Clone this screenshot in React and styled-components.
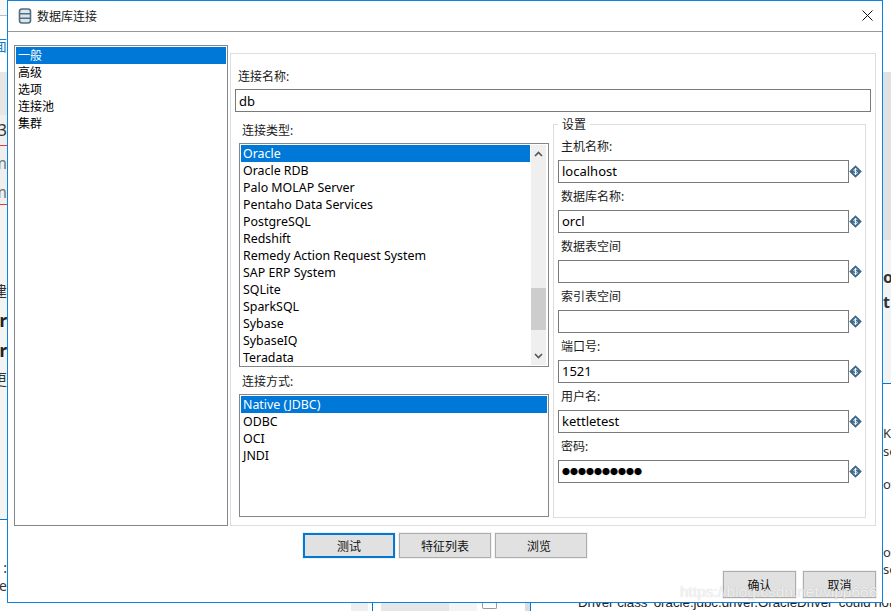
import React from "react";
import styled, { createGlobalStyle } from "styled-components";

const GlobalStyle = createGlobalStyle`
  * { box-sizing: border-box; }
  html, body { margin: 0; padding: 0; background: #fff; }
  body {
    width: 891px;
    height: 611px;
    overflow: hidden;
    font-family: "Noto Sans", "Noto Sans CJK SC", sans-serif;
    font-size: 12px;
    color: #000;
  }
`;

const Desktop = styled.div`
  position: relative;
  width: 891px;
  height: 611px;
  overflow: hidden;
  background: #fff;
`;

/* what shows of the page behind the dialog */
const LeftStrip = styled.div`
  position: absolute;
  left: 0;
  top: 0;
  width: 7px;
  height: 611px;
  display: flex;
  flex-direction: column;
`;

const RightStrip = styled.div`
  position: absolute;
  left: 883px;
  top: 0;
  width: 8px;
  height: 611px;
  display: flex;
  flex-direction: column;
`;

const BottomStrip = styled.div`
  position: absolute;
  left: 0;
  top: 603px;
  width: 891px;
  height: 8px;
  display: flex;
  overflow: hidden;
`;

const Band = styled.div`
  flex: none;
  height: ${(p) => p.$h}px;
  background: ${(p) => p.$bg || "#fff"};
  border-bottom: ${(p) => (p.$line ? `1px solid ${p.$line}` : "0")};
  display: flex;
  align-items: center;
  justify-content: ${(p) => (p.$end ? "flex-end" : "flex-start")};
  overflow: hidden;
  white-space: nowrap;
  font-size: ${(p) => p.$size || 15}px;
  font-weight: ${(p) => p.$weight || 400};
  color: ${(p) => p.$color || "#333"};
`;

const BottomPiece = styled.div`
  flex: none;
  width: ${(p) => p.$w}px;
  background: ${(p) => p.$bg || "#fff"};
  border-left: ${(p) => (p.$blue ? "1px solid #0078d7" : "0")};
`;

const BottomBox = styled.div`
  flex: none;
  width: 15px;
  height: 6px;
  border: 1px solid #9a9a9a;
  border-top: 0;
  border-radius: 0 0 2px 2px;
`;

const DriverText = styled.div`
  flex: none;
  margin-top: -8px;
  padding-left: 47px;
  white-space: nowrap;
  font-size: 13.3px;
  color: #222;
  font-family: "Liberation Sans", sans-serif;
`;

const Dialog = styled.div`
  position: absolute;
  left: 7px;
  top: 0;
  width: 876px;
  height: 603px;
  display: flex;
  flex-direction: column;
  background: #fff;
  border: 1px solid #0a84e0;
`;

const TitleBar = styled.div`
  flex: none;
  height: 31px;
  display: flex;
  align-items: center;
  padding: 0 9px 1px 10px;
  border-bottom: 1px solid #999;
`;

const TitleText = styled.span`
  margin-left: 5px;
  color: #1a1a1a;
`;

const CloseIcon = styled.svg`
  margin-left: auto;
`;

const Body = styled.div`
  flex: none;
  display: flex;
  gap: 2px;
  padding: 13px 6px 0;
`;

const NavList = styled.div`
  flex: none;
  width: 214px;
  height: 481px;
  padding: 1px;
  border: 1px solid #82878c;
`;

const Row = styled.div`
  height: 17px;
  line-height: 17px;
  padding-left: 2px;
  white-space: nowrap;
  font-size: ${(p) => p.$size || 12}px;
  background: ${(p) => (p.$active ? "#0078d7" : "transparent")};
  color: ${(p) => (p.$active ? "#fff" : "#000")};
`;

const Panel = styled.div`
  flex: none;
  width: 646px;
  height: 473px;
  margin-top: 8px;
  padding: 14px 4px 0;
  border: 1px solid #ddd;
`;

const Label = styled.div`
  height: 17px;
  line-height: 17px;
  margin-left: 3px;
  white-space: nowrap;
  color: #1a1a1a;
`;

const TextBox = styled.div`
  width: ${(p) => (p.$w ? `${p.$w}px` : "100%")};
  flex: none;
  height: 23px;
  line-height: 21px;
  padding-left: 3px;
  border: 1px solid #7a7a7a;
  background: #fff;
  font-size: 13px;
  white-space: nowrap;
`;

const NameBox = styled(TextBox)`
  margin-top: 4px;
  line-height: 22px;
`;

const Columns = styled.div`
  display: flex;
  gap: 4px;
  padding-left: 4px;
`;

const LeftColumn = styled.div`
  flex: none;
  width: 310px;
  padding-top: 10px;
`;

const ListBox = styled.div`
  display: flex;
  height: ${(p) => p.$h}px;
  margin-top: 4px;
  padding: 1px;
  border: 1px solid #82878c;
  overflow: hidden;
`;

const ListRows = styled.div`
  flex: 1;
  min-width: 0;
  overflow: hidden;
`;

const ScrollBar = styled.div`
  flex: none;
  width: 15px;
  margin: 0 1px;
  display: flex;
  flex-direction: column;
  align-items: center;
  background: #efefef;
`;

const ScrollGap = styled.div`
  flex: none;
  height: ${(p) => p.$h}px;
`;

const ScrollThumb = styled.div`
  flex: none;
  width: 100%;
  height: 42px;
  background: #cdcdcd;
`;

const Arrow = styled.svg`
  flex: none;
  display: block;
`;

const MethodLabel = styled(Label)`
  margin-top: 6px;
`;

const Settings = styled.fieldset`
  flex: none;
  width: 313px;
  height: 402px;
  margin: 4px 0 0;
  padding: 5px 4px 0;
  border: 1px solid #ddd;
  min-width: 0;
`;

const Legend = styled.legend`
  margin-left: 0;
  padding: 0 4px;
  line-height: 17px;
  color: #1a1a1a;
`;

const Field = styled.div`
  height: 50px;
`;

const FieldRow = styled.div`
  display: flex;
  align-items: center;
  margin-top: 5px;
`;

const ValueBadge = styled.svg`
  flex: none;
  display: block;
`;

const PasswordDots = styled.span`
  font-size: 8px;
  vertical-align: 1px;
`;

const ActionRow = styled.div`
  flex: none;
  display: flex;
  gap: 4px;
  margin-top: 7px;
  padding-left: 295px;
`;

const FooterRow = styled.div`
  flex: none;
  display: flex;
  justify-content: flex-end;
  gap: 7px;
  margin-top: 13px;
  padding-right: 6px;
`;

const Button = styled.div`
  flex: none;
  width: ${(p) => p.$w}px;
  height: ${(p) => p.$h}px;
  padding-right: ${(p) => p.$nudge || 0}px;
  display: flex;
  align-items: center;
  justify-content: center;
  background: #e1e1e1;
  color: #111;
  border: ${(p) => (p.$primary ? "2px solid #0078d7" : "1px solid #adadad")};
  box-shadow: 0 0 0 1px #f1f1f1;
`;

const Watermark = styled.div`
  position: absolute;
  left: 680px;
  top: 583px;
  font-family: "Liberation Sans", sans-serif;
  font-size: 15.5px;
  white-space: nowrap;
  color: rgba(255, 255, 255, 0.78);
  text-shadow: 0 0 1px rgba(90, 90, 90, 0.35);
`;

const connectionTypes = [
  "Oracle",
  "Oracle RDB",
  "Palo MOLAP Server",
  "Pentaho Data Services",
  "PostgreSQL",
  "Redshift",
  "Remedy Action Request System",
  "SAP ERP System",
  "SQLite",
  "SparkSQL",
  "Sybase",
  "SybaseIQ",
  "Teradata",
];

const accessMethods = ["Native (JDBC)", "ODBC", "OCI", "JNDI"];
const sections = ["一般", "高级", "选项", "连接池", "集群"];

const settingsFields = [
  { label: "主机名称:", value: "localhost" },
  { label: "数据库名称:", value: "orcl" },
  { label: "数据表空间", value: "" },
  { label: "索引表空间", value: "" },
  { label: "端口号:", value: "1521" },
  { label: "用户名:", value: "kettletest" },
  { label: "密码:", value: "●●●●●●●●●●", secret: true },
];

const DatabaseIcon = () => (
  <svg width="14" height="16" viewBox="0 0 14 16">
    <rect x="1.5" y="1" width="11" height="14" rx="2.5" fill="#dfe6eb" stroke="#4f6f85" strokeWidth="1.6" />
    <path d="M2 5.8h10M2 10.2h10" stroke="#4f6f85" strokeWidth="1.4" />
  </svg>
);

const Badge = () => (
  <ValueBadge width="13" height="13" viewBox="0 0 13 13">
    <path d="M6.5 0.2 L12.8 6.5 L6.5 12.8 L0.2 6.5 Z" fill="#3f6a8a" />
    <circle cx="6.5" cy="6.5" r="4.3" fill="#3f6a8a" />
    <path
      d="M8.4 4.7 C7.7 3.8 4.8 3.8 4.8 5.3 C4.8 6.9 8.4 6 8.4 7.7 C8.4 9.2 5.3 9.2 4.6 8.2 M6.5 3 V10"
      fill="none"
      stroke="#eef3f6"
      strokeWidth="1"
    />
  </ValueBadge>
);

export default function App() {
  return (
    <Desktop>
      <GlobalStyle />

      <LeftStrip>
        <Band $h={16} $bg="#f8f8f8" $line="#bdbdbd" />
        <Band $h={56} $end $color="#1b7fc4">
          面
        </Band>
        <Band $h={43} $bg="#e6e6e6" />
        <Band $h={31} $bg="#efefef" $end $line="#e53935" $size={16}>
          3
        </Band>
        <Band $h={34} $bg="#efefef" $end $color="#777" $size={16}>
          m
        </Band>
        <Band $h={25} $bg="#efefef" $end $color="#777" $line="#e53935" $size={16}>
          m
        </Band>
        <Band $h={72} $bg="#f3f3f3" />
        <Band $h={26} $bg="#f3f3f3" $end>
          建
        </Band>
        <Band $h={34} $bg="#f3f3f3" $end $weight={700} $size={17} $color="#222">
          r
        </Band>
        <Band $h={26} $bg="#f3f3f3" $end $weight={700} $size={17} $color="#222">
          tr
        </Band>
        <Band $h={30} $bg="#f3f3f3" $end>
          更
        </Band>
        <Band $h={127} $bg="#f3f3f3" $line="#0078d7" />
        <Band $h={41} />
        <Band $h={12} $end $size={14}>
          :
        </Band>
        <Band $h={24} $end $size={14}>
          e
        </Band>
      </LeftStrip>

      <RightStrip>
        <Band $h={72} />
        <Band $h={168} $bg="#e1e1e1" />
        <Band $h={25} $bg="#f3f3f3" />
        <Band $h={24} $bg="#f3f3f3" $weight={700} $size={16}>
          o
        </Band>
        <Band $h={26} $bg="#f3f3f3" $weight={700} $size={16}>
          t
        </Band>
        <Band $h={69} $bg="#f3f3f3" $line="#0078d7" />
        <Band $h={40} />
        <Band $h={18} $size={13}>
          Ke
        </Band>
        <Band $h={18} $size={13}>
          se
        </Band>
        <Band $h={15} />
        <Band $h={18} $size={13}>
          ot
        </Band>
        <Band $h={50} />
        <Band $h={18} $size={13}>
          o
        </Band>
        <Band $h={16} $size={13}>
          se
        </Band>
      </RightStrip>

      <BottomStrip>
        <BottomPiece $w={351} />
        <BottomPiece $w={17} $bg="#eee" />
        <BottomPiece $w={4} />
        <BottomPiece $w={9} $blue />
        <BottomPiece $w={68} $bg="#e6e6e6" />
        <BottomPiece $w={28} $bg="#f4f4f4" />
        <BottomPiece $w={5} />
        <BottomBox />
        <BottomPiece $w={28} />
        <BottomPiece $w={5} $bg="#ddd" />
        <BottomPiece $w={1} $blue />
        <DriverText>Driver class 'oracle.jdbc.driver.OracleDriver' could not</DriverText>
      </BottomStrip>

      <Dialog>
        <TitleBar>
          <DatabaseIcon />
          <TitleText>数据库连接</TitleText>
          <CloseIcon width="11" height="11" viewBox="0 0 11 11">
            <path d="M0.5 0.5 L10.5 10.5 M10.5 0.5 L0.5 10.5" stroke="#111" strokeWidth="1" />
          </CloseIcon>
        </TitleBar>

        <Body>
          <NavList>
            {sections.map((name, i) => (
              <Row key={name} $active={i === 0}>
                {name}
              </Row>
            ))}
          </NavList>

          <Panel>
            <Label>连接名称:</Label>
            <NameBox>db</NameBox>

            <Columns>
              <LeftColumn>
                <Label>连接类型:</Label>
                <ListBox $h={224}>
                  <ListRows>
                    {connectionTypes.map((name, i) => (
                      <Row key={name} $active={i === 0} $size={12.4}>
                        {name}
                      </Row>
                    ))}
                  </ListRows>
                  <ScrollBar>
                    <ScrollGap $h={6} />
                    <Arrow width="9" height="6" viewBox="0 0 9 6">
                      <path d="M1 5 L4.5 1.5 L8 5" fill="none" stroke="#555" strokeWidth="1.6" />
                    </Arrow>
                    <ScrollGap $h={131} />
                    <ScrollThumb />
                    <ScrollGap $h={23} />
                    <Arrow width="9" height="6" viewBox="0 0 9 6">
                      <path d="M1 1 L4.5 4.5 L8 1" fill="none" stroke="#555" strokeWidth="1.6" />
                    </Arrow>
                  </ScrollBar>
                </ListBox>

                <MethodLabel>连接方式:</MethodLabel>
                <ListBox $h={123}>
                  <ListRows>
                    {accessMethods.map((name, i) => (
                      <Row key={name} $active={i === 0} $size={12.4}>
                        {name}
                      </Row>
                    ))}
                  </ListRows>
                </ListBox>
              </LeftColumn>

              <Settings>
                <Legend>设置</Legend>
                {settingsFields.map((field) => (
                  <Field key={field.label}>
                    <Label>{field.label}</Label>
                    <FieldRow>
                      <TextBox $w={291}>
                        {field.secret ? <PasswordDots>{field.value}</PasswordDots> : field.value}
                      </TextBox>
                      <Badge />
                    </FieldRow>
                  </Field>
                ))}
              </Settings>
            </Columns>
          </Panel>
        </Body>

        <ActionRow>
          <Button $w={92} $h={25} $primary>
            测试
          </Button>
          <Button $w={92} $h={25}>
            特征列表
          </Button>
          <Button $w={92} $h={25} $nudge={4}>
            浏览
          </Button>
        </ActionRow>

        <FooterRow>
          <Button $w={73} $h={27}>
            确认
          </Button>
          <Button $w={73} $h={27}>
            取消
          </Button>
        </FooterRow>
      </Dialog>

      <Watermark>https://blog.csdn.net/vipp666</Watermark>
    </Desktop>
  );
}
